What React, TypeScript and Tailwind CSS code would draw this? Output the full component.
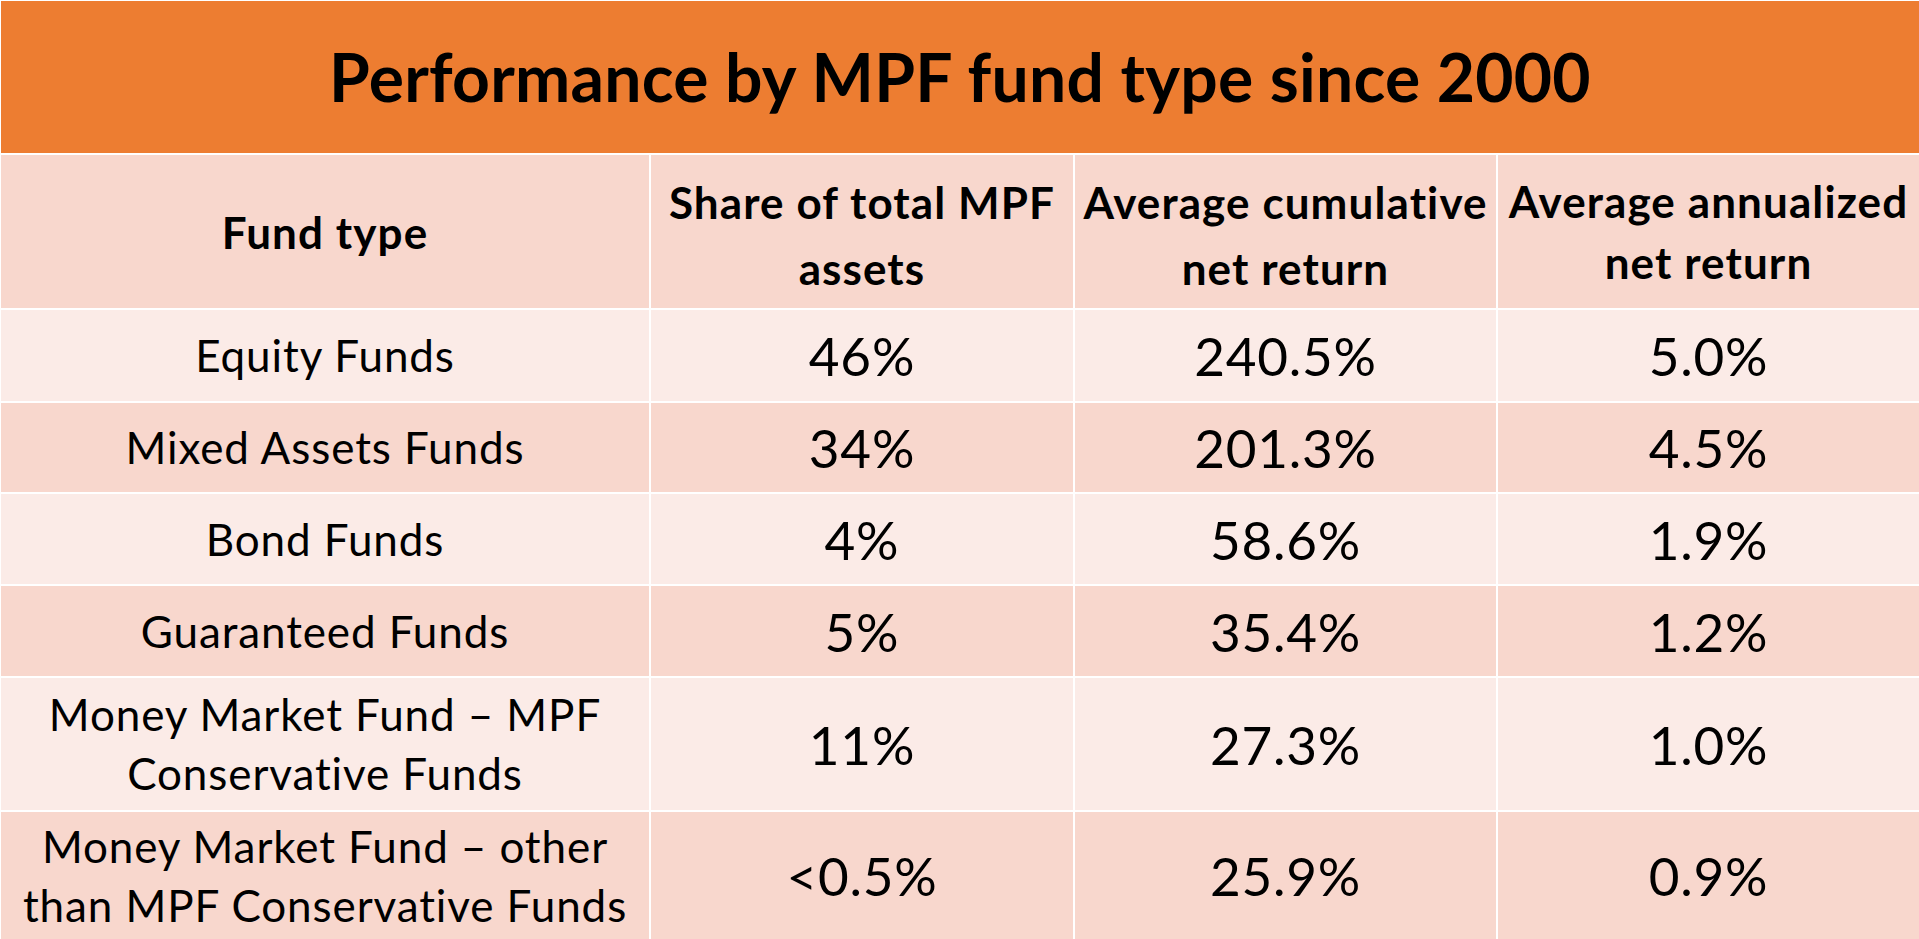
import React from 'react';

type Row = {
    fund: React.ReactNode;
    share: string;
    cumulative: string;
    annualized: string;
    height: string;
};

const rows: Row[] = [
    { fund: 'Equity Funds', share: '46%', cumulative: '240.5%', annualized: '5.0%', height: 'h-[91px]' },
    { fund: 'Mixed Assets Funds', share: '34%', cumulative: '201.3%', annualized: '4.5%', height: 'h-[89px]' },
    { fund: 'Bond Funds', share: '4%', cumulative: '58.6%', annualized: '1.9%', height: 'h-[90px]' },
    { fund: 'Guaranteed Funds', share: '5%', cumulative: '35.4%', annualized: '1.2%', height: 'h-[90px]' },
    {
        fund: (
            <>
                Money Market Fund – MPF
                <br />
                Conservative Funds
            </>
        ),
        share: '11%',
        cumulative: '27.3%',
        annualized: '1.0%',
        height: 'h-[132px]',
    },
    {
        fund: (
            <>
                Money Market Fund – other
                <br />
                than MPF Conservative Funds
            </>
        ),
        share: '<0.5%',
        cumulative: '25.9%',
        annualized: '0.9%',
        height: 'h-[127px]',
    },
];

const cell = 'flex items-center justify-center text-center text-black';
const head = 'h-[153px] bg-[#F8D7CD] text-[44px] font-bold tracking-[1.1px]';

export default function App() {
    return (
        <div
            className="w-[1919px] h-[939px] overflow-hidden bg-white pt-[1px] pl-[1px]"
            style={{ fontFamily: 'Lato, "Open Sans", sans-serif' }}
        >
            {/* Title bar */}
            <div className="h-[152px] bg-[#ED7D31] flex items-center justify-center">
                <h1 className="text-[66px] font-bold text-black leading-none tracking-[0.25px]">
                    Performance by MPF fund type since 2000
                </h1>
            </div>

            {/* Table */}
            <div className="mt-[2px] grid grid-cols-[648px_422px_421px_421px] gap-[2px]">
                <div className={`${cell} ${head} leading-[62px]`}>Fund type</div>
                <div className={`${cell} ${head} leading-[66px] pt-[6px]`}>
                    Share of total MPF
                    <br />
                    assets
                </div>
                <div className={`${cell} ${head} leading-[66px] pt-[6px]`}>
                    Average cumulative
                    <br />
                    net return
                </div>
                <div className={`${cell} ${head} leading-[61px]`}>
                    Average annualized
                    <br />
                    net return
                </div>

                {rows.map((r, i) => {
                    const bg = i % 2 === 0 ? 'bg-[#FBEBE7]' : 'bg-[#F8D7CD]';
                    const num = `${cell} ${r.height} ${bg} text-[53px] leading-none tracking-[0.8px]`;
                    return (
                        <React.Fragment key={i}>
                            <div className={`${cell} ${r.height} ${bg} text-[44px] leading-[59px] tracking-[0.9px]`}>
                                {r.fund}
                            </div>
                            <div className={num}>{r.share}</div>
                            <div className={num}>{r.cumulative}</div>
                            <div className={num}>{r.annualized}</div>
                        </React.Fragment>
                    );
                })}
            </div>
        </div>
    );
}
